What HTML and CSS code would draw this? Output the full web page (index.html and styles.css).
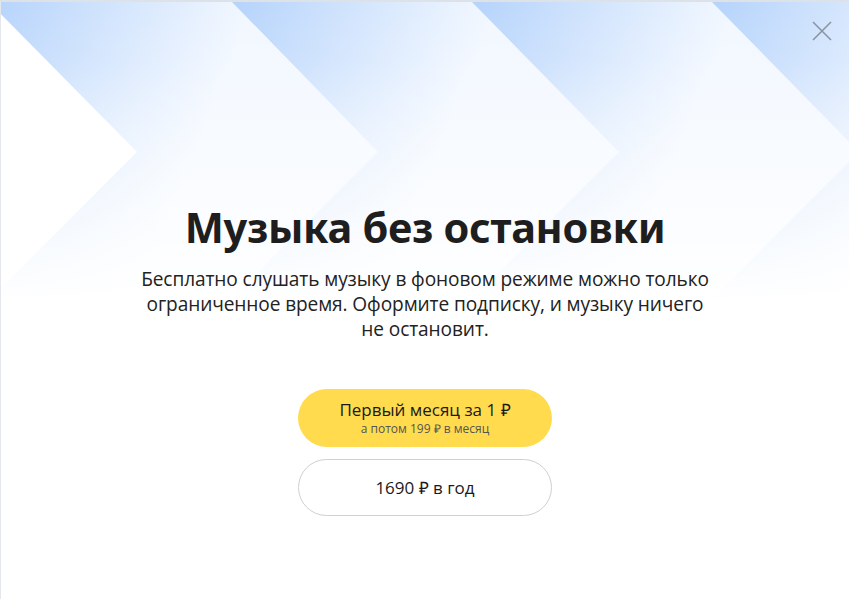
FILE: index.html
```html
<!DOCTYPE html>
<html lang="ru">
<head>
<meta charset="utf-8">
<title>Музыка без остановки</title>
<link rel="stylesheet" href="styles.css">
</head>
<body>
<div class="modal">
  <svg class="bg" width="849" height="599" viewBox="0 0 849 599" aria-hidden="true">
    <defs>
      <linearGradient id="fade" x1="0" y1="0" x2="0" y2="1">
        <stop offset="0" stop-color="#fff" stop-opacity="0"/>
        <stop offset="0.1" stop-color="#fff" stop-opacity="0.06"/>
        <stop offset="0.3" stop-color="#fff" stop-opacity="0.55"/>
        <stop offset="0.5" stop-color="#fff" stop-opacity="1"/>
        <stop offset="1" stop-color="#fff" stop-opacity="1"/>
      </linearGradient>
      <linearGradient id="g0" gradientUnits="userSpaceOnUse" x1="-12" y1="0" x2="218" y2="90">
        <stop offset="0" stop-color="#b5d3fb"/>
        <stop offset="1" stop-color="#f3f8ff"/>
      </linearGradient>
      <linearGradient id="g1" gradientUnits="userSpaceOnUse" x1="231" y1="0" x2="461" y2="90">
        <stop offset="0" stop-color="#b5d3fb"/>
        <stop offset="1" stop-color="#f3f8ff"/>
      </linearGradient>
      <linearGradient id="g2" gradientUnits="userSpaceOnUse" x1="471" y1="0" x2="701" y2="90">
        <stop offset="0" stop-color="#b5d3fb"/>
        <stop offset="1" stop-color="#f3f8ff"/>
      </linearGradient>
      <linearGradient id="g3" gradientUnits="userSpaceOnUse" x1="711" y1="0" x2="941" y2="90">
        <stop offset="0" stop-color="#b5d3fb"/>
        <stop offset="1" stop-color="#f3f8ff"/>
      </linearGradient>
    </defs>
    <rect width="849" height="599" fill="#fff"/>
    <polygon points="-12,0 136,150 -164,450 1100,450 1100,0" fill="url(#g0)"/>
    <polygon points="231,0 377,150 77,450 1100,450 1100,0" fill="url(#g1)"/>
    <polygon points="471,0 618,150 318,450 1100,450 1100,0" fill="url(#g2)"/>
    <polygon points="711,0 858,150 558,450 1100,450 1100,0" fill="url(#g3)"/>
    <rect width="849" height="599" fill="url(#fade)"/>
  </svg>

  <button class="close" type="button" aria-label="Закрыть">
    <svg width="22" height="22" viewBox="0 0 22 22"><path d="M2 2 L20 20 M20 2 L2 20" stroke="#8a95a1" stroke-width="1.6" fill="none"/></svg>
  </button>

  <main class="content">
    <h1 class="title">Музыка без остановки</h1>
    <p class="text">Бесплатно слушать музыку в фоновом режиме можно только ограниченное время. Оформите подписку, и музыку ничего не остановит.</p>
    <div class="actions">
      <button class="btn btn-primary" type="button">
        <span class="btn-main">Первый месяц за 1 ₽</span>
        <span class="btn-sub">а потом 199 ₽ в месяц</span>
      </button>
      <button class="btn btn-secondary" type="button">
        <span class="btn-main">1690 ₽ в год</span>
      </button>
    </div>
  </main>
</div>
</body>
</html>
```

FILE: styles.css
```css
* { box-sizing: border-box; }
html, body { margin: 0; padding: 0; background: #fff; }
body {
  font-family: "Open Sans", "Noto Sans", Arial, sans-serif;
  color: #1f1f1f;
}
.modal {
  position: relative;
  width: 849px;
  height: 599px;
  overflow: hidden;
  border-top: 2px solid #dde2e8;
  border-left: 1px solid #e4e7eb;
}
.bg {
  position: absolute;
  left: 0;
  top: 0;
  z-index: 0;
}
.close {
  position: absolute;
  top: 18px;
  right: 16px;
  width: 22px;
  height: 22px;
  padding: 0;
  border: 0;
  background: none;
  z-index: 2;
}
.close svg { display: block; }
.content {
  position: relative;
  z-index: 1;
  display: flex;
  flex-direction: column;
  align-items: center;
  padding-top: 197px;
}
.title {
  margin: 0;
  font-family: "Noto Sans", sans-serif;
  font-size: 41.5px;
  line-height: 56px;
  font-weight: 700;
  color: #1e1e1e;
  letter-spacing: -0.3px;
}
.text {
  margin: 12px 0 0;
  width: 584px;
  text-align: center;
  font-family: "Open Sans", sans-serif;
  font-size: 19.1px;
  line-height: 25px;
  color: #222;
  letter-spacing: -0.1px;
}
.actions {
  display: flex;
  flex-direction: column;
  gap: 12px;
  margin-top: 47px;
}
.btn {
  width: 254px;
  height: 58px;
  border-radius: 29px;
  display: flex;
  flex-direction: column;
  align-items: center;
  justify-content: center;
  font-family: "Open Sans", sans-serif;
  color: #1a1a1a;
  padding: 0;
  cursor: pointer;
}
.btn-primary {
  background: #ffdb4d;
  border: 0;
}
.btn-secondary {
  background: #fff;
  border: 1px solid #d0d0d0;
  height: 57px;
}
.btn-main {
  font-size: 17px;
  line-height: 20px;
}
.btn-sub {
  margin-top: 1px;
  font-size: 12px;
  line-height: 16px;
  color: #555;
}
```
